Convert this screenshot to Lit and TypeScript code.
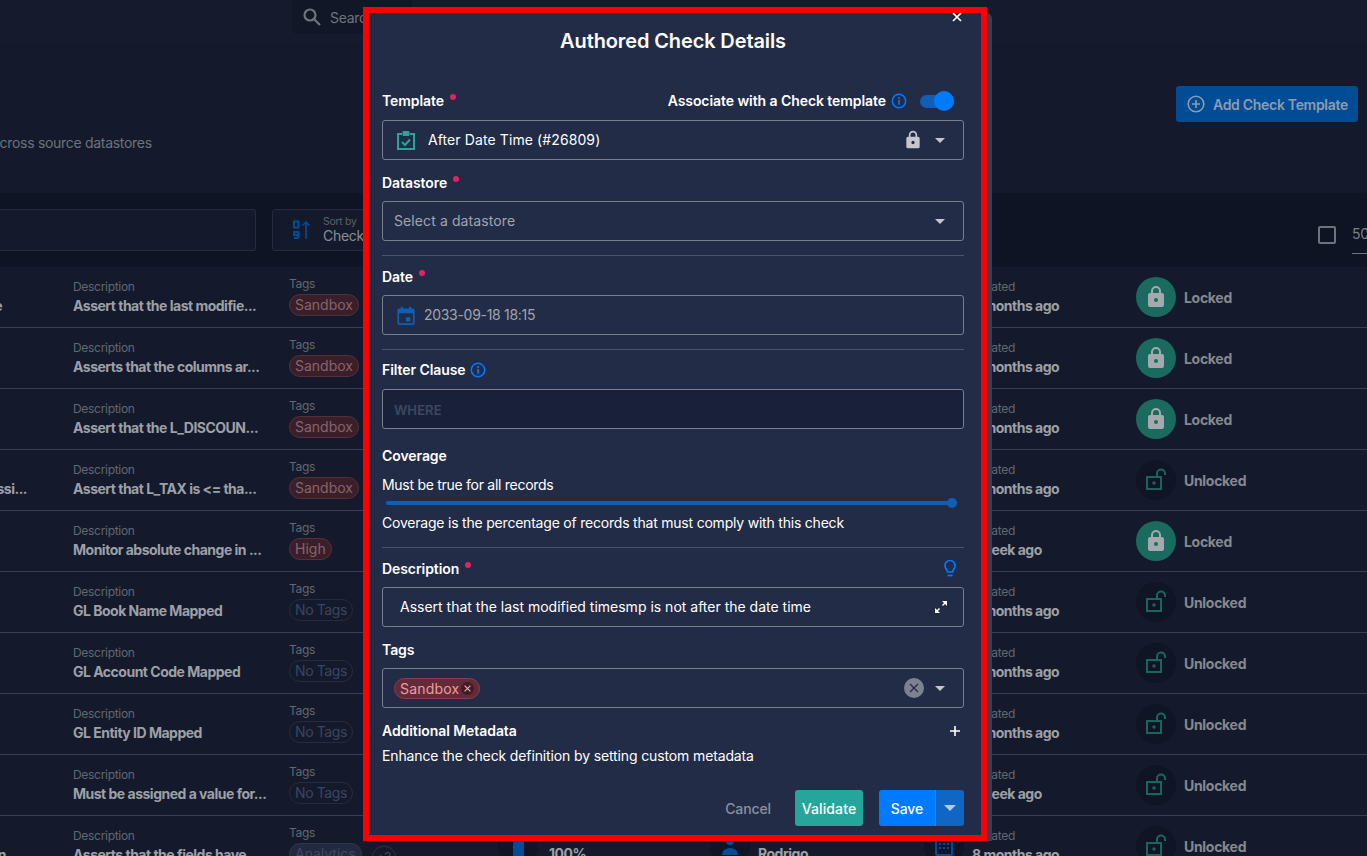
import { LitElement, html, css, svg } from 'lit';
import { customElement } from 'lit/decorators.js';

interface CheckRow {
  lead: string;
  leadEnd: number;
  description: string;
  tag: string;
  tagKind: 'red' | 'none' | 'plain';
  when: string;
  locked: boolean;
}

const ROWS: CheckRow[] = [
  { lead: 'e', leadEnd: 2, description: 'Assert that the last modifie...', tag: 'Sandbox', tagKind: 'red', when: '8 months ago', locked: true },
  { lead: '', leadEnd: 0, description: 'Asserts that the columns ar...', tag: 'Sandbox', tagKind: 'red', when: '8 months ago', locked: true },
  { lead: '', leadEnd: 0, description: 'Assert that the L_DISCOUN...', tag: 'Sandbox', tagKind: 'red', when: '8 months ago', locked: true },
  { lead: 'ssi...', leadEnd: 27, description: 'Assert that L_TAX is <= tha...', tag: 'Sandbox', tagKind: 'red', when: '8 months ago', locked: false },
  { lead: '', leadEnd: 0, description: 'Monitor absolute change in ...', tag: 'High', tagKind: 'red', when: '1 week ago', locked: true },
  { lead: '', leadEnd: 0, description: 'GL Book Name Mapped', tag: 'No Tags', tagKind: 'none', when: '8 months ago', locked: false },
  { lead: '', leadEnd: 0, description: 'GL Account Code Mapped', tag: 'No Tags', tagKind: 'none', when: '8 months ago', locked: false },
  { lead: '', leadEnd: 0, description: 'GL Entity ID Mapped', tag: 'No Tags', tagKind: 'none', when: '8 months ago', locked: false },
  { lead: '', leadEnd: 0, description: 'Must be assigned a value for...', tag: 'No Tags', tagKind: 'none', when: '1 week ago', locked: false },
  { lead: 'n', leadEnd: 6, description: 'Asserts that the fields have...', tag: 'Analytics', tagKind: 'plain', when: '8 months ago', locked: false },
];

const caret = svg`<path d="M0 0h10L5 5z" fill="currentColor"></path>`;
const infoIcon = svg`<circle cx="8" cy="8" r="6.7" fill="none" stroke="currentColor" stroke-width="1.5"></circle><circle cx="8" cy="4.9" r="1" fill="currentColor"></circle><rect x="7.2" y="6.8" width="1.6" height="5" fill="currentColor"></rect>`;
const lockClosed = svg`<path fill="currentColor" d="M18 8h-1V6a5 5 0 0 0-10 0v2H6a2 2 0 0 0-2 2v10a2 2 0 0 0 2 2h12a2 2 0 0 0 2-2V10a2 2 0 0 0-2-2zM9 6a3 3 0 0 1 6 0v2H9V6zm3 11a2 2 0 1 1 0-4 2 2 0 0 1 0 4z"></path>`;
const lockOpen = svg`<rect x="3" y="9" width="14" height="12" fill="none" stroke="currentColor" stroke-width="2"></rect><circle cx="10" cy="15" r="1.7" fill="currentColor"></circle><path fill="none" stroke="currentColor" stroke-width="2" d="M13 8V5.500a4 4 0 0 1 8 0V7"></path>`;

@customElement('app-root')
export class AppRoot extends LitElement {
  static styles = css`
    :host {
      display: block;
      position: relative;
      width: 1367px;
      height: 856px;
      overflow: hidden;
      background: #141a2b;
      font-family: 'Inter', 'Liberation Sans', sans-serif;
      color: #fff;
      letter-spacing: -0.3px;
    }

    /* page behind the dialog */
    .topbar {
      height: 44px;
      box-sizing: border-box;
      padding: 0 0 0 292px;
      background: #151b2c;
    }
    .search {
      width: 120px;
      height: 34px;
      background: #111727;
      border-radius: 0 0 5px 5px;
      display: flex;
      align-items: center;
      gap: 8px;
      padding-left: 10px;
      box-sizing: border-box;
      color: #6f737e;
      font-size: 14px;
    }
    .page-head {
      height: 149px;
      box-sizing: border-box;
      display: flex;
      justify-content: space-between;
      background: #141a2b;
    }
    .subtitle {
      margin: 90px 0 0 -8px;
      font-size: 14px;
      color: #6e727d;
      white-space: nowrap;
    }
    .add-btn {
      margin: 42px 9px 0 0;
      width: 182px;
      height: 36px;
      box-sizing: border-box;
      background: #004c95;
      border-radius: 3px;
      color: #8e9bb0;
      font-size: 14px;
      font-weight: 600;
      display: flex;
      align-items: center;
      gap: 8px;
      padding-left: 11px;
      white-space: nowrap;
    }
    .toolbar {
      height: 74px;
      box-sizing: border-box;
      background: #0e1424;
      padding: 16px 0;
      display: flex;
      gap: 16px;
    }
    .filter-box {
      width: 256px;
      height: 42px;
      box-sizing: border-box;
      background: #141a2b;
      border: 1px solid #262c3d;
      border-left: none;
      border-radius: 0 3px 3px 0;
    }
    .sort-box {
      width: 120px;
      height: 42px;
      box-sizing: border-box;
      border: 1px solid #262c3d;
      border-radius: 3px;
      background: #141a2b;
      display: flex;
      align-items: center;
      gap: 12px;
      padding-left: 20px;
      color: #8a8e98;
    }
    .sort-box small {
      display: block;
      font-size: 10.5px;
      color: #5b606c;
      line-height: 11px;
    }
    .sort-box b {
      display: block;
      font-weight: 400;
      font-size: 14px;
      line-height: 17px;
    }
    .pager {
      margin: 15px 0 0 auto;
      display: flex;
      align-items: flex-start;
      gap: 16px;
      color: #7c808a;
      font-size: 14px;
      line-height: 20px;
    }
    .checkbox {
      width: 14px;
      height: 14px;
      margin-top: 2px;
      border: 2px solid #6f737d;
      border-radius: 2px;
    }
    .page-size {
      width: 15px;
      overflow: hidden;
      padding-bottom: 9px;
      border-bottom: 1px solid #6f737d;
    }

    .row {
      height: 61px;
      box-sizing: border-box;
      border-bottom: 1px solid #3a3f4f;
      display: grid;
      grid-template-columns: 73px 216px 209px 212px 214px 48px 164px 1fr;
      align-items: start;
      overflow: hidden;
    }
    .label {
      font-size: 12px;
      line-height: 16px;
      color: #63676f;
      white-space: nowrap;
    }
    .value {
      font-size: 14px;
      line-height: 20px;
      font-weight: 700;
      letter-spacing: -0.5px;
      color: #9da0a7;
      white-space: nowrap;
    }
    .lead {
      padding-top: 29px;
      display: flex;
      justify-content: flex-end;
      font-size: 14px;
      line-height: 20px;
      font-weight: 700;
      letter-spacing: -0.5px;
      color: #9da0a7;
      white-space: nowrap;
    }
    .cell-desc {
      padding-top: 12px;
    }
    .cell-desc .value {
      margin-top: 1px;
    }
    .cell-tags {
      padding-top: 9px;
      display: flex;
      flex-direction: column;
      align-items: flex-start;
      position: relative;
    }
    .pill {
      box-sizing: border-box;
      height: 22px;
      margin-top: 2px;
      padding: 0 5px;
      border-radius: 11px;
      font-size: 14px;
      line-height: 20px;
      letter-spacing: 0;
      white-space: nowrap;
      border: 1px solid;
    }
    .pill.red {
      background: #3a1f2a;
      border-color: #55303a;
      color: #87646a;
    }
    .pill.none {
      background: transparent;
      border-color: #262c3f;
      color: #3c4560;
      letter-spacing: -0.4px;
    }
    .pill.plain {
      background: #232a40;
      border-color: #2e354d;
      color: #3f4863;
    }
    .more {
      position: absolute;
      left: 83px;
      top: 30px;
      box-sizing: border-box;
      width: 24px;
      height: 22px;
      border: 1px solid #2c3246;
      border-radius: 11px;
      font-size: 12px;
      line-height: 20px;
      text-align: center;
      color: #454c60;
    }
    .cell-stat {
      display: flex;
      gap: 8px;
      padding-top: 10px;
    }
    .cell-stat.cover {
      gap: 11px;
    }
    .disc {
      flex: none;
      width: 40px;
      height: 40px;
      border-radius: 50%;
      background: #0f1524;
      display: flex;
      align-items: center;
      justify-content: center;
      color: #004c95;
    }
    .cell-when {
      padding-top: 12px;
    }
    .cell-when .value {
      margin-top: 1px;
    }
    .stat-text .value {
      margin-top: 2px;
    }
    .cell-lock {
      display: flex;
      align-items: center;
      gap: 8px;
      height: 60px;
      font-size: 14px;
      font-weight: 700;
      color: #85888f;
    }
    .lock {
      width: 40px;
      height: 40px;
      border-radius: 50%;
      display: flex;
      align-items: center;
      justify-content: center;
      background: #0f1524;
      color: #17675c;
    }
    .lock.on {
      background: #1a6a5f;
      color: #a5a8ad;
    }

    /* dialog */
    .dialog {
      position: absolute;
      left: 368px;
      top: 13px;
      width: 624px;
      height: 828px;
      box-sizing: border-box;
      background: #232c47;
      border-radius: 6px;
      padding: 0 28px 0 14px;
      display: flex;
      flex-direction: column;
    }
    .scroll-track {
      position: absolute;
      top: 0;
      right: 0;
      bottom: 0;
      width: 10px;
      border-radius: 0 6px 0 0;
      background: #373f5a;
    }
    .marker {
      position: absolute;
      left: 363px;
      top: 7px;
      width: 624px;
      height: 834px;
      box-sizing: border-box;
      border: 6px solid #ff0000;
      pointer-events: none;
    }
    .close {
      position: absolute;
      left: 583px;
      top: -2px;
      width: 12px;
      height: 12px;
      color: #fff;
    }
    h1 {
      margin: 16px 0 0;
      height: 24px;
      text-align: center;
      font-size: 20px;
      line-height: 24px;
      font-weight: 600;
      letter-spacing: -0.12px;
    }
    .field-label {
      display: flex;
      align-items: center;
      font-size: 14px;
      font-weight: 600;
      line-height: 20px;
      height: 20px;
      margin-top: 13px;
      letter-spacing: -0.07px;
    }
    .field-label.first {
      margin-top: 38px;
    }
    .field-label.after-rule {
      margin-top: 11px;
    }
    .field-label.filter {
      margin-top: 10px;
    }
    .field-label.filter .info {
      margin-left: 4px;
    }
    .field-label.coverage {
      margin-top: 17px;
    }
    .req {
      width: 6px;
      height: 6px;
      border-radius: 50%;
      background: #e91e63;
      margin: -8px 0 0 6px;
    }
    .spacer {
      margin-left: auto;
    }
    .info {
      color: #007bff;
      display: block;
      flex: none;
      margin-left: 5px;
    }
    .bulb {
      color: #007bff;
      display: block;
      margin-right: 6px;
    }
    .toggle {
      position: relative;
      width: 34px;
      height: 13px;
      margin: 0 10px 0 13px;
      border-radius: 7px;
      background: #0f5fb5;
    }
    .toggle::after {
      content: '';
      position: absolute;
      right: 0;
      top: -4px;
      width: 20px;
      height: 20px;
      border-radius: 50%;
      background: #007bff;
    }
    .input {
      height: 40px;
      box-sizing: border-box;
      border: 1px solid #7a7f8c;
      border-radius: 3px;
      display: flex;
      align-items: center;
      font-size: 14px;
      letter-spacing: 0.1px;
      margin-top: 8px;
      padding: 0 18px 0 11px;
    }
    .input.roomy {
      margin-top: 9px;
    }
    .input.indented {
      padding-left: 17px;
      letter-spacing: 0;
    }
    .input .caret {
      margin-left: 14px;
      color: #c4c7cf;
      flex: none;
    }
    .txt {
      padding-bottom: 2px;
    }
    .muted {
      color: #a0a4b0;
    }
    .date-text {
      letter-spacing: -0.3px;
    }
    .clip-icon {
      margin: 0 13px 0 3px;
    }
    .cal-icon {
      margin: 0 9px 0 3px;
    }
    .lock-icon {
      color: #c4c7cf;
      margin-right: -2px;
    }
    .expand {
      margin-right: -2px;
    }
    .plus {
      margin-right: 3px;
    }
    hr {
      border: none;
      height: 1px;
      background: #4b526a;
      margin: 14px 0 0;
    }
    .sunken {
      background: #19213a;
    }
    .placeholder {
      color: #3f4760;
      font-weight: 600;
      font-size: 13px;
      padding: 2px 0 0;
    }
    .line {
      font-size: 14px;
      line-height: 20px;
      letter-spacing: -0.21px;
      white-space: nowrap;
      margin-top: 8px;
    }
    .line.must {
      margin-top: 9px;
      letter-spacing: -0.28px;
    }
    .line.enhance {
      margin-top: 5px;
      letter-spacing: -0.13px;
    }
    .slider {
      position: relative;
      height: 4px;
      margin: 6px 7px 0 4px;
      border-radius: 2px;
      background: #0f5fb5;
    }
    .slider::after {
      content: '';
      position: absolute;
      right: 0;
      top: -3px;
      width: 10px;
      height: 10px;
      border-radius: 50%;
      background: #0f5fb5;
    }
    .chip {
      box-sizing: border-box;
      height: 21px;
      display: flex;
      align-items: center;
      gap: 2px;
      padding: 0 5px;
      border-radius: 11px;
      background: #632a37;
      border: 1px solid #8a3f4a;
      color: #ee9ca0;
      font-size: 14px;
      letter-spacing: 0.2px;
    }
    .chip i {
      width: 13px;
      height: 13px;
      border-radius: 50%;
      background: #451a25;
      color: #d9b2b6;
      display: flex;
      align-items: center;
      justify-content: center;
    }
    .clear {
      width: 20px;
      height: 20px;
      margin-right: -3px;
      border-radius: 50%;
      background: #7d8293;
      color: #232c47;
      display: flex;
      align-items: center;
      justify-content: center;
    }
    .actions {
      display: flex;
      justify-content: flex-end;
      align-items: center;
      margin-top: 24px;
      font-size: 14px;
      font-weight: 500;
      letter-spacing: -0.1px;
    }
    .cancel {
      color: #8b8f9d;
      margin-right: 24px;
    }
    .validate {
      width: 68px;
      height: 36px;
      background: #26a69a;
      border-radius: 3px;
      letter-spacing: 0.1px;
      display: flex;
      align-items: center;
      justify-content: center;
    }
    .save {
      margin-left: 16px;
      height: 36px;
      display: flex;
      border-radius: 3px;
      overflow: hidden;
    }
    .save span {
      width: 56px;
      background: #007bff;
      display: flex;
      align-items: center;
      justify-content: center;
      border-right: 1px solid #3f7fc8;
    }
    .save em {
      width: 28px;
      background: #0f66c4;
      display: flex;
      align-items: center;
      justify-content: center;
      color: #b9c8dc;
    }
  `;

  private caretIcon() {
    return html`<svg class="caret" width="10" height="5" viewBox="0 0 10 5">${caret}</svg>`;
  }

  private renderRow(row: CheckRow, index: number) {
    const isLast = index === ROWS.length - 1;
    return html`
      <div class="row">
        <div class="lead" style="width:${row.leadEnd}px">${row.lead}</div>
        <div class="cell-desc">
          <div class="label">Description</div>
          <div class="value">${row.description}</div>
        </div>
        <div class="cell-tags">
          <div class="label">Tags</div>
          <div class="pill ${row.tagKind}">${row.tag}</div>
          ${isLast ? html`<div class="more">+2</div>` : ''}
        </div>
        <div class="cell-stat cover">
          <div class="disc">
            <svg width="11" height="24" viewBox="0 0 11 24"><rect width="11" height="24" fill="currentColor"></rect></svg>
          </div>
          <div class="stat-text"><div class="label">Coverage</div><div class="value">100%</div></div>
        </div>
        <div class="cell-stat">
          <div class="disc">
            <svg width="24" height="24" viewBox="0 0 24 24"><circle cx="12" cy="7" r="4" fill="currentColor"></circle><path d="M4 21c0-5 4-7 8-7s8 2 8 7z" fill="currentColor"></path></svg>
          </div>
          <div class="stat-text"><div class="label">Owner</div><div class="value">Rodrigo</div></div>
        </div>
        <div class="cell-stat">
          <div class="disc">
            <svg width="18" height="22" viewBox="0 0 18 22"><rect x="1" y="3" width="16" height="17" rx="1" fill="none" stroke="currentColor" stroke-width="2"></rect><path d="M4 8h2v2H4zM8 8h2v2H8zM12 8h2v2h-2zM4 12h2v2H4zM8 12h2v2H8zM12 12h2v2h-2z" fill="currentColor"></path></svg>
          </div>
        </div>
        <div class="cell-when">
          <div class="label">Created</div>
          <div class="value">${row.when}</div>
        </div>
        <div class="cell-lock">
          <div class="lock ${row.locked ? 'on' : ''}">
            <svg width="24" height="24" viewBox="0 0 24 24">${row.locked ? lockClosed : lockOpen}</svg>
          </div>
          ${row.locked ? 'Locked' : 'Unlocked'}
        </div>
      </div>
    `;
  }

  private renderPage() {
    return html`
      <div class="topbar">
        <div class="search">
          <svg width="20" height="20" viewBox="0 0 20 20" fill="none" stroke="currentColor" stroke-width="2.2"><circle cx="8" cy="8" r="5.5"></circle><path d="M12 12l6 6"></path></svg>
          Search
        </div>
      </div>
      <div class="page-head">
        <div class="subtitle">across source datastores</div>
        <div class="add-btn">
          <svg width="18" height="18" viewBox="0 0 18 18" fill="none" stroke="currentColor" stroke-width="1.6"><circle cx="9" cy="9" r="7.8"></circle><path d="M9 5v8M5 9h8"></path></svg>
          Add Check Template
        </div>
      </div>
      <div class="toolbar">
        <div class="filter-box"></div>
        <div class="sort-box">
          <svg width="18" height="20" viewBox="0 0 18 20" fill="none" stroke="#004c95" stroke-width="2"><rect x="1" y="1.5" width="4.5" height="6"></rect><path d="M5.5 18H1M5.5 12v6M1 12h4.5v3H1z"></path><path d="M13 19V2M9.5 5.5L13 2l3.5 3.5" stroke-width="1.6"></path></svg>
          <div><small>Sort by</small><b>Check</b></div>
        </div>
        <div class="pager">
          <div class="checkbox"></div>
          <div class="page-size">50</div>
        </div>
      </div>
      ${ROWS.map((row, i) => this.renderRow(row, i))}
    `;
  }

  private renderDialog() {
    return html`
      <div class="dialog">
        <div class="scroll-track"></div>
        <svg class="close" viewBox="0 0 12 12" fill="none" stroke="currentColor" stroke-width="1.7"><path d="M2 2l8 8M10 2l-8 8"></path></svg>
        <h1>Authored Check Details</h1>

        <div class="field-label first">
          Template<span class="req"></span>
          <span class="spacer"></span>
          Associate with a Check template
          <svg class="info" width="16" height="16" viewBox="0 0 16 16">${infoIcon}</svg>
          <span class="toggle"></span>
        </div>
        <div class="input roomy">
          <svg class="clip-icon" width="18" height="19" viewBox="0 0 18 19" fill="none" stroke="#26a69a" stroke-width="2">
            <path d="M5 3H1v15h16V3h-4"></path><rect x="5.500" y="0" width="7" height="5" rx="1" fill="#26a69a" stroke="none"></rect><path d="M5 11l3 3 5-5.500"></path>
          </svg>
          <span class="txt">After Date Time (#26809)</span>
          <span class="spacer"></span>
          <svg class="lock-icon" width="20" height="20" viewBox="0 0 24 24">${lockClosed}</svg>
          ${this.caretIcon()}
        </div>

        <div class="field-label">Datastore<span class="req"></span></div>
        <div class="input">
          <span class="txt muted">Select a datastore</span>
          <span class="spacer"></span>
          ${this.caretIcon()}
        </div>
        <hr />

        <div class="field-label after-rule">Date<span class="req"></span></div>
        <div class="input">
          <svg class="cal-icon" width="18" height="19" viewBox="0 0 20 22" fill="#0f5fb5">
            <path d="M4 1h2.500v2h7V1H16v2h2a2 2 0 0 1 2 2v15a2 2 0 0 1-2 2H2a2 2 0 0 1-2-2V5a2 2 0 0 1 2-2h2zM2 8.500V20h16V8.500z"></path><rect x="10" y="13" width="5" height="5"></rect>
          </svg>
          <span class="txt muted date-text">2033-09-18 18:15</span>
        </div>
        <hr />

        <div class="field-label filter">
          Filter Clause
          <svg class="info" width="16" height="16" viewBox="0 0 16 16">${infoIcon}</svg>
        </div>
        <div class="input sunken roomy"><span class="placeholder">WHERE</span></div>

        <div class="field-label coverage">Coverage</div>
        <div class="line must">Must be true for all records</div>
        <div class="slider"></div>
        <div class="line">Coverage is the percentage of records that must comply with this check</div>
        <hr />

        <div class="field-label after-rule">
          Description<span class="req"></span>
          <span class="spacer"></span>
          <svg class="bulb" width="16" height="20" viewBox="0 0 16 20" fill="none" stroke="currentColor" stroke-width="1.7">
            <path d="M5.500 13c0-2-2.500-3-2.500-6.500a5 5 0 0 1 10 0C13 10 10.500 11 10.500 13z"></path><path d="M5.500 16.500h5"></path>
          </svg>
        </div>
        <div class="input indented">
          <span class="txt">Assert that the last modified timesmp is not after the date time</span>
          <span class="spacer"></span>
          <svg class="expand" width="12" height="12" viewBox="0 0 12 12" fill="#fff">
            <path d="M7 0h5v5L10 3 8 5 7 4l2-2zM0 7l2 2 2-2 1 1-2 2 2 2H0z"></path>
          </svg>
        </div>

        <div class="field-label">Tags</div>
        <div class="input">
          <span class="chip">
            Sandbox
            <i><svg width="7" height="7" viewBox="0 0 6 6" fill="none" stroke="currentColor" stroke-width="1"><path d="M.5.5l5 5M5.500.5l-5 5"></path></svg></i>
          </span>
          <span class="spacer"></span>
          <span class="clear"><svg width="10" height="10" viewBox="0 0 10 10" fill="none" stroke="currentColor" stroke-width="1.3"><path d="M1 1l8 8M9 1l-8 8"></path></svg></span>
          ${this.caretIcon()}
        </div>

        <div class="field-label">
          Additional Metadata
          <span class="spacer"></span>
          <svg class="plus" width="12" height="12" viewBox="0 0 12 12" fill="none" stroke="#fff" stroke-width="1.6"><path d="M6 1v10M1 6h10"></path></svg>
        </div>
        <div class="line enhance">Enhance the check definition by setting custom metadata</div>

        <div class="actions">
          <span class="cancel">Cancel</span>
          <span class="validate">Validate</span>
          <div class="save">
            <span>Save</span>
            <em><svg width="12" height="6" viewBox="0 0 10 5">${caret}</svg></em>
          </div>
        </div>
      </div>
      <div class="marker"></div>
    `;
  }

  render() {
    return html`${this.renderPage()}${this.renderDialog()}`;
  }
}
